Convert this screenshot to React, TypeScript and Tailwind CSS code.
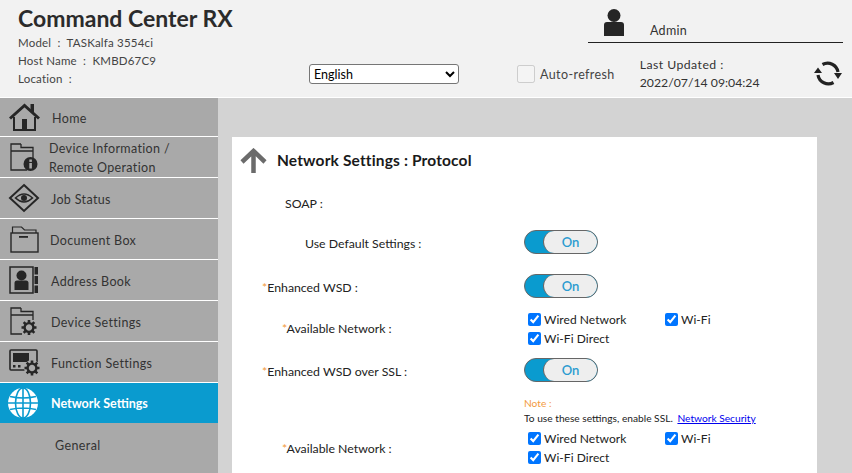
import type { ReactNode } from 'react'

function HomeIcon() {
  return (
    <svg width="31" height="28" viewBox="0 0 31 28" className="text-[#262626]">
      <path d="M1 15.500 15.500 2.500 30 15.500" fill="none" stroke="currentColor" strokeWidth="3" />
      <rect x="21.500" y="1" width="3.500" height="8" fill="currentColor" />
      <path d="M5 14V27H26V14" fill="none" stroke="currentColor" strokeWidth="2" />
      <rect x="13" y="16" width="5" height="11" fill="currentColor" />
    </svg>
  )
}

function FolderBase() {
  return <path d="M11 1H1v26h16M1 8h22v7M11 1v3.500h12V8" fill="none" stroke="currentColor" strokeWidth="1.3" />
}

function InfoIcon() {
  return (
    <svg width="28" height="28" viewBox="0 0 28 28" className="text-[#262626]">
      <FolderBase />
      <circle cx="20.500" cy="21" r="7" fill="currentColor" />
      <rect x="19.300" y="20" width="2.600" height="5.500" fill="#a9a9a9" />
      <rect x="19.300" y="16.500" width="2.600" height="2.400" fill="#a9a9a9" />
    </svg>
  )
}

function EyeIcon() {
  return (
    <svg width="32" height="30" viewBox="0 0 32 30" className="text-[#262626]">
      <path d="M16 2 30 15 16 28 2 15Z" fill="none" stroke="currentColor" strokeWidth="2" />
      <path d="M7.500 15Q16 7 24.500 15 16 23 7.500 15Z" fill="none" stroke="currentColor" strokeWidth="1.6" />
      <circle cx="16" cy="15" r="3" fill="currentColor" />
    </svg>
  )
}

function BoxIcon() {
  return (
    <svg width="29" height="27" viewBox="0 0 29 27" className="text-[#262626]">
      <rect x="1" y="7" width="27" height="19" fill="none" stroke="currentColor" strokeWidth="1.4" />
      <path d="M2.500 7V1h9l3 3h11.500v3" fill="none" stroke="currentColor" strokeWidth="1.2" />
      <rect x="9" y="10" width="9" height="1.800" fill="currentColor" />
    </svg>
  )
}

function BookIcon() {
  return (
    <svg width="30" height="28" viewBox="0 0 30 28" className="text-[#262626]">
      <rect x="1" y="1" width="23" height="26" fill="none" stroke="currentColor" strokeWidth="1.5" />
      <circle cx="12.500" cy="9.500" r="5" fill="currentColor" />
      <path d="M5.500 24v-7q0-2.500 2.500-2.500h9q2.500 0 2.500 2.500v7Z" fill="currentColor" />
      <rect x="25.500" y="1" width="3.500" height="7.500" fill="currentColor" />
      <rect x="25.500" y="10" width="3.500" height="8" fill="currentColor" />
      <rect x="25.500" y="19.500" width="3.500" height="7.500" fill="currentColor" />
    </svg>
  )
}

function Gear({ x, y }: { x: number; y: number }) {
  const teeth = 'M-1.300-7.500h2.600v3h-2.600ZM-1.300 4.500h2.600v3h-2.600ZM-7.500-1.300h3v2.600h-3ZM4.500-1.300h3v2.600h-3Z'
  return (
    <g transform={`translate(${x} ${y})`}>
      <circle r="4.400" fill="none" stroke="currentColor" strokeWidth="2.4" />
      <path d={teeth} fill="currentColor" />
      <path d={teeth} fill="currentColor" transform="rotate(45)" />
    </g>
  )
}

function DeviceIcon() {
  return (
    <svg width="28" height="28" viewBox="0 0 28 28" className="text-[#262626]">
      <FolderBase />
      <rect x="12" y="13" width="16" height="15" fill="#a9a9a9" />
      <Gear x={19} y={20.5} />
    </svg>
  )
}

function FunctionIcon() {
  return (
    <svg width="31" height="27" viewBox="0 0 31 27" className="text-[#262626]">
      <rect x="1" y="1" width="27" height="20" rx="1" fill="none" stroke="currentColor" strokeWidth="1.6" />
      <rect x="4" y="4" width="16" height="9" fill="currentColor" />
      <rect x="4" y="16" width="2.500" height="2.500" fill="currentColor" />
      <rect x="9" y="16" width="2.500" height="2.500" fill="currentColor" />
      <circle cx="23" cy="19" r="8" fill="#a9a9a9" />
      <Gear x={23} y={19} />
    </svg>
  )
}

function GlobeIcon() {
  return (
    <svg width="30" height="30" viewBox="0 0 30 30" className="text-white">
      <circle cx="15" cy="15" r="15" fill="currentColor" />
      <g fill="none" stroke="#0a9bcf" strokeWidth="1.6">
        <ellipse cx="15" cy="15" rx="7.500" ry="15" />
        <path d="M15 0v30M0 15h30M2 8.500q13 3 26 0M2 21.500q13-3 26 0" />
      </g>
    </svg>
  )
}

function RefreshIcon() {
  return (
    <svg width="28" height="27" viewBox="0 0 28 27" className="text-[#222]">
      <path d="M8.500 4.500A10.500 10.500 0 0 1 24 12" fill="none" stroke="currentColor" strokeWidth="3.2" />
      <path d="M19.500 22.500A10.500 10.500 0 0 1 4 15" fill="none" stroke="currentColor" strokeWidth="3.2" />
      <path d="M20 13h8l-4 6ZM0 13h8L4 7.500Z" fill="currentColor" />
    </svg>
  )
}

const menu = [
  { icon: <HomeIcon />, label: 'Home', text: 'pl-[12px] pt-[2px]', row: 'h-[38px]' },
  { icon: <InfoIcon />, label: 'Device Information /\nRemote Operation', text: 'pl-[9px] pt-[1px]', row: 'h-[41px] border-t border-white' },
  { icon: <EyeIcon />, label: 'Job Status', text: 'pl-[11px] pt-[2px]', row: 'h-[41px] border-t border-white' },
  { icon: <BoxIcon />, label: 'Document Box', text: 'pl-[10px] pt-[2px]', row: 'h-[41px] border-t border-white' },
  { icon: <BookIcon />, label: 'Address Book', text: 'pl-[11px] pt-[2px]', row: 'h-[41px] border-t border-white' },
  { icon: <DeviceIcon />, label: 'Device Settings', text: 'pl-[11px] pt-[2px]', row: 'h-[41px] border-t border-white' },
  { icon: <FunctionIcon />, label: 'Function Settings', text: 'pl-[11px] pt-[2px]', row: 'h-[41px] border-t border-white' },
]

function Toggle() {
  return (
    <div className="flex h-6 w-[74px] items-stretch overflow-hidden rounded-full border border-[#666] bg-[#0a9bcf]">
      <div className="ml-[18px] flex flex-1 items-center justify-center rounded-full border-l border-[#666] bg-[#eeeeee] pt-[2px] text-[13px] font-semibold text-[#2b9bd0]">
        On
      </div>
    </div>
  )
}

function Check({ label }: { label: string }) {
  return (
    <label className="flex items-center gap-[3px] text-[12px] leading-[13px] tracking-[0.05px] text-[#222]">
      <input type="checkbox" defaultChecked className="m-0 h-[13px] w-[13px]" />
      {label}
    </label>
  )
}

function Networks() {
  return (
    <div className="ml-[4px] grid w-[200px] grid-cols-[137px_1fr] gap-y-[6px]">
      <Check label="Wired Network" />
      <Check label="Wi-Fi" />
      <Check label="Wi-Fi Direct" />
    </div>
  )
}

function Row({ label, star, indent, height, children }: { label: string; star?: boolean; indent: string; height: string; children?: ReactNode }) {
  return (
    <div className={`flex items-center ${height}`}>
      <div className={`w-[292px] shrink-0 text-[12.3px] text-[#222] ${indent}`}>
        {star && <span className="text-[#f39a3d]">*</span>}
        {label}
      </div>
      {children}
    </div>
  )
}

export default function App() {
  return (
    <div className="flex h-[473px] w-[852px] flex-col overflow-hidden bg-[#d3d3d3] font-['Lato',sans-serif] text-[#333]">
      <header className="flex h-[98px] shrink-0 border-b border-white bg-[#f2f2f2]">
        <div className="w-[309px] shrink-0 pl-[18px] pt-[3px]">
          <h1 className="text-[23px] font-bold leading-[30px] text-[#2b2b2b]">Command Center RX</h1>
          <div className="mt-[1px] text-[11.5px] leading-[18px] tracking-[0.2px] text-[#444]">
            <p>Model&nbsp; :&nbsp; TASKalfa 3554ci</p>
            <p>Host Name&nbsp; :&nbsp; KMBD67C9</p>
            <p>Location&nbsp; :</p>
          </div>
        </div>
        <div className="pt-[64px]">
          <select className="block h-5 w-[150px] rounded-[3px] border border-[#767676] bg-white text-[12.5px] text-black">
            <option>English</option>
          </select>
        </div>
        <div className="ml-[58px] flex flex-1 flex-col">
          <div className="ml-[71px] mr-[9px] flex h-[43px] items-end border-b border-[#222]">
            <svg width="20" height="28" viewBox="0 0 20 28" className="mb-[5px] ml-[16px] text-[#262626]">
              <circle cx="10" cy="6.500" r="6.500" fill="currentColor" />
              <path d="M0 27v-11q0-3 3-3h14q3 0 3 3v11Z" fill="currentColor" />
            </svg>
            <span className="mb-[1px] ml-[26px] text-[12.5px] tracking-[0.3px] text-[#333]">Admin</span>
          </div>
          <div className="flex items-start pt-[12px]">
            <div className="flex items-center gap-[5px] pt-[9px]">
              <input type="checkbox" disabled className="m-0 h-[18px] w-[18px]" />
              <span className="mt-[2px] text-[12.5px] tracking-[0.4px] text-[#444]">Auto-refresh</span>
            </div>
            <div className="ml-[25px] mt-[1px] text-[12.25px] leading-[18px] text-[#333]">
              <p className="tracking-[0.45px]">Last Updated :</p>
              <p>2022/07/14 09:04:24</p>
            </div>
            <div className="ml-[54px] mt-[5px]"><RefreshIcon /></div>
          </div>
        </div>
      </header>

      <div className="flex min-h-0 flex-1">
        <nav className="w-[218px] shrink-0 bg-[#a9a9a9]">
          {menu.map((item) => (
            <div key={item.label} className={`flex items-center pl-[8px] ${item.row}`}>
              <div className="flex w-[32px] shrink-0 justify-center">{item.icon}</div>
              <span className={`whitespace-pre-line text-[12.5px] leading-[19px] tracking-[0.35px] text-[#333] ${item.text}`}>{item.label}</span>
            </div>
          ))}
          <div className="flex h-[41px] items-center border-t border-white bg-[#0a9bcf] pl-[8px]">
            <GlobeIcon />
            <span className="pl-[13px] pt-[2px] text-[12.5px] font-bold text-white">Network Settings</span>
          </div>
          <div className="flex h-[42px] items-center pl-[55px] pt-[4px] text-[12.5px] tracking-[0.4px] text-[#333]">General</div>
        </nav>

        <main className="min-w-0 flex-1 overflow-hidden pl-[14px] pr-[35px] pt-[39px]">
          <div className="h-full bg-white">
            <div className="flex h-[47px] items-center pl-[8px]">
              <svg width="27" height="26" viewBox="0 0 27 26" className="text-[#6b6b6b]">
                <path d="M13.500 25V3M2 14 13.500 3 25 14" fill="none" stroke="currentColor" strokeWidth="4.5" />
              </svg>
              <h2 className="ml-[10px] text-[15.5px] font-bold tracking-[0.15px] text-[#1a1a1a]">Network Settings : Protocol</h2>
            </div>
            <Row label="SOAP :" indent="pl-[53px] pt-[3px]" height="h-[37px]" />
            <Row label="Use Default Settings :" indent="pl-[73px] pt-[5px]" height="h-[42px]"><Toggle /></Row>
            <Row label="Enhanced WSD :" star indent="pl-[30px] pt-[5px]" height="h-[46px]"><Toggle /></Row>
            <Row label="Available Network :" star indent="pl-[50px]" height="h-[40px]"><Networks /></Row>
            <Row label="Enhanced WSD over SSL :" star indent="pl-[30px] pt-[5px]" height="h-[42px]"><Toggle /></Row>
            <div className="pl-[292px] pt-[5px] text-[10.2px] leading-[15px]">
              <p className="text-[#f39a3d]">Note :</p>
              <p className="text-[#222]">
                To use these settings, enable SSL. <a href="#" className="ml-[2px] text-[#0000ee] underline">Network Security</a>
              </p>
            </div>
            <Row label="Available Network :" star indent="pl-[50px] pt-[3px]" height="h-[44px]"><Networks /></Row>
          </div>
        </main>
      </div>
    </div>
  )
}
